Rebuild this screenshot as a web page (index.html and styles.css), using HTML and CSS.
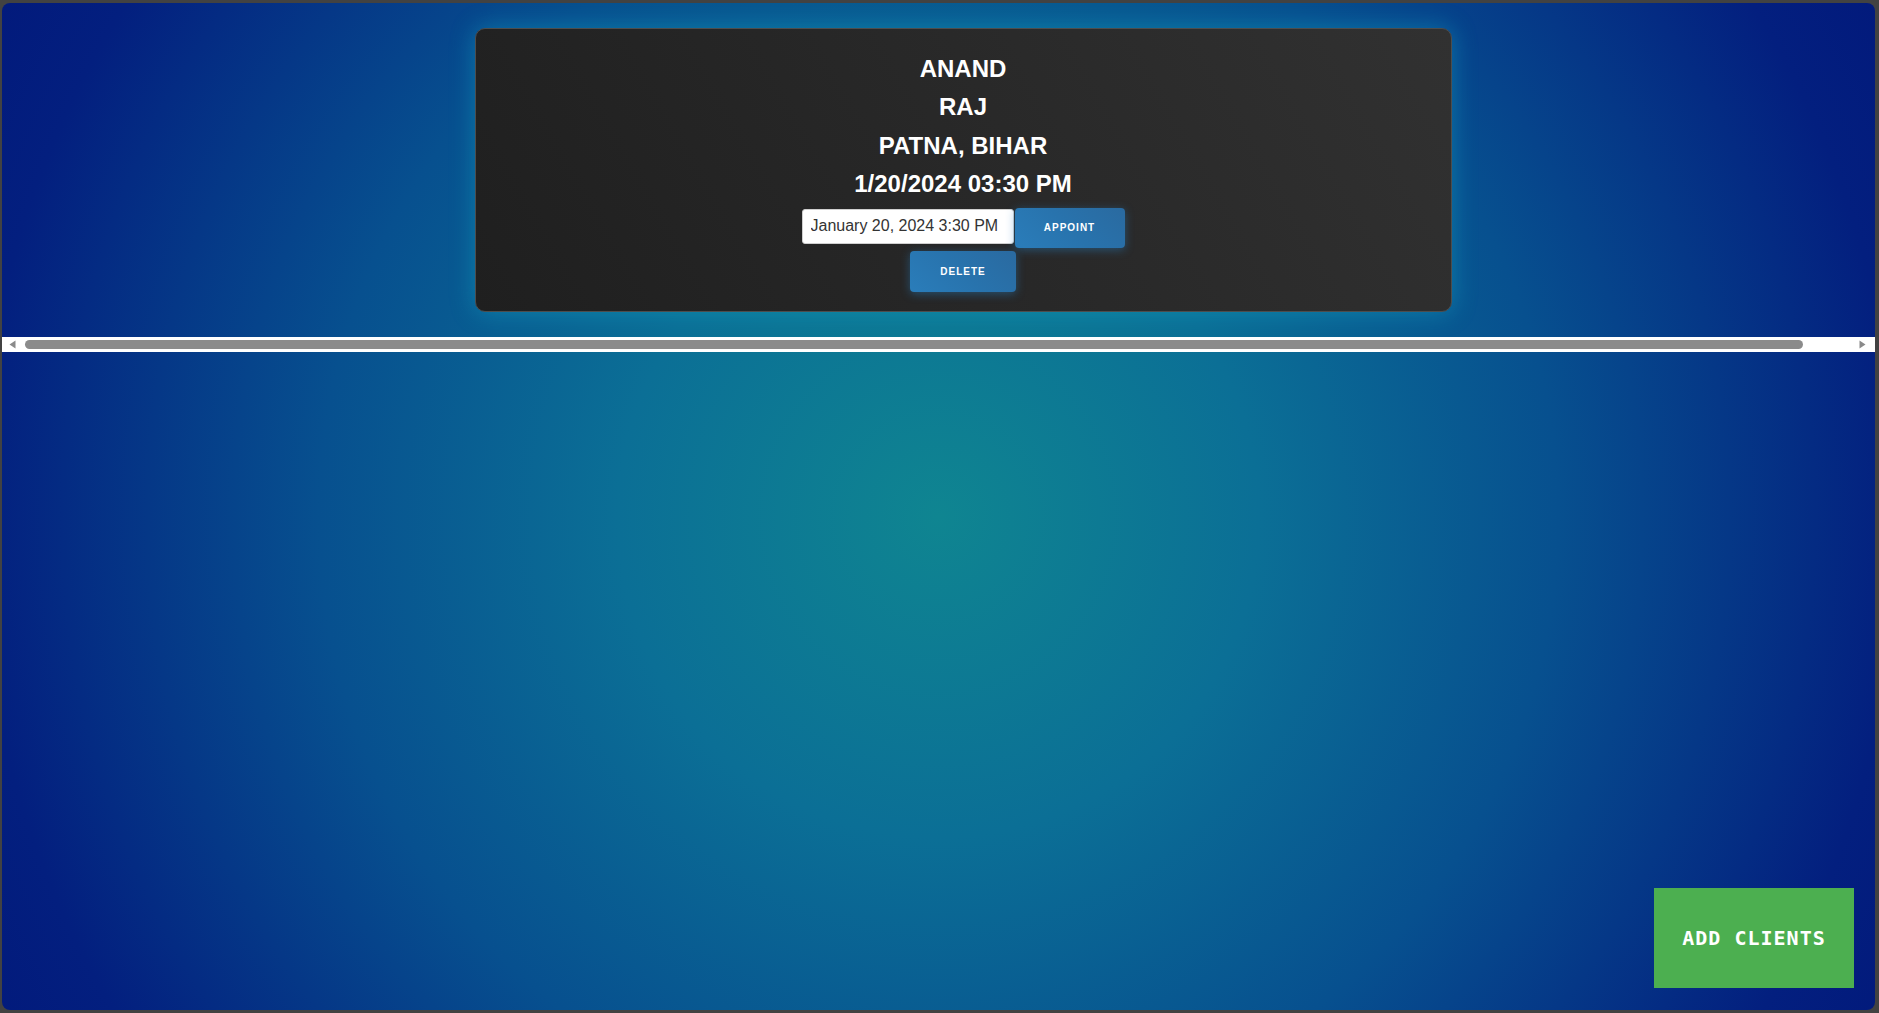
FILE: index.html
```html
<!DOCTYPE html>
<html lang="en">
<head>
<meta charset="utf-8">
<title>Clients</title>
<link rel="stylesheet" href="styles.css">
</head>
<body>
<div class="app">
  <div class="client-strip">
    <div class="client-track">
      <div class="client-card">
        <p class="client-line">ANAND</p>
        <p class="client-line">RAJ</p>
        <p class="client-line">PATNA, BIHAR</p>
        <p class="client-line">1/20/2024 03:30 PM</p>
        <div class="appoint-row">
          <input class="date-input" type="text" value="January 20, 2024 3:30 PM">
          <button class="action-btn appoint-btn">APPOINT</button>
        </div>
        <button class="action-btn delete-btn">DELETE</button>
      </div>
    </div>
  </div>
  <div class="hscroll">
    <svg class="hs-arrow" width="17" height="15" viewBox="0 0 17 15"><polygon points="13.5,3.5 13.5,11.5 7.5,7.5" fill="#8a8a8a"/></svg>
    <div class="hs-track"><div class="hs-thumb"></div></div>
    <svg class="hs-arrow" width="17" height="15" viewBox="0 0 17 15"><polygon points="1.5,3.5 1.5,11.5 7.5,7.5" fill="#8a8a8a"/></svg>
  </div>
  <button class="add-clients">ADD CLIENTS</button>
</div>
</body>
</html>
```
FILE: styles.css
```css
html, body {
  margin: 0;
  height: 100%;
}
body {
  background: #424242;
  padding: 3px 4px 3px 2px;
  box-sizing: border-box;
  font-family: "Liberation Sans", Arial, sans-serif;
  overflow: hidden;
}
.app {
  height: 1007px;
  border-radius: 8px;
  background: radial-gradient(circle at 50% 51%, #0f8591 0%, #0b6f96 30%, #07508f 58%, #031f7f 90%, #021a7c 100%);
  display: flex;
  flex-direction: column;
  overflow: hidden;
}
.client-strip {
  overflow: hidden;
}
.client-track {
  width: 1922px;
  display: flex;
  justify-content: center;
  padding: 25px 0 25px;
}
.client-card {
  width: 977px;
  box-sizing: border-box;
  border: 1px solid #4d4d4d;
  border-radius: 10px;
  background: linear-gradient(60deg, #1f1f1f 0%, #282828 50%, #313131 100%);
  box-shadow: 0 0 24px rgba(20, 170, 200, 0.45);
  padding: 20.5px 0 19.5px;
  display: flex;
  flex-direction: column;
  align-items: center;
}
.client-line {
  margin: 0;
  color: #ffffff;
  font-size: 24px;
  font-weight: bold;
  line-height: 38.5px;
}
.appoint-row {
  display: flex;
  align-items: flex-start;
  margin-top: 4px;
}
.date-input {
  margin: 1px 0 0;
  width: 212px;
  height: 35px;
  box-sizing: border-box;
  border: 1px solid #cfcfcf;
  border-radius: 3px;
  background: #fff;
  padding: 0 0 0 8px;
  font-family: "Liberation Sans", Arial, sans-serif;
  font-size: 16px;
  color: #333;
  outline: none;
}
.action-btn {
  border: none;
  border-radius: 4px;
  background: linear-gradient(45deg, #2a7dba 0%, #2873ad 50%, #2a6aa0 100%);
  box-shadow: 0 2px 10px rgba(40, 130, 200, 0.45);
  color: #fff;
  font-family: "Liberation Sans", Arial, sans-serif;
  font-weight: bold;
  font-size: 10px;
  letter-spacing: 1px;
  padding: 0;
  cursor: pointer;
}
.appoint-btn {
  width: 110px;
  height: 40px;
  margin-left: 1px;
}
.delete-btn {
  width: 106px;
  height: 41px;
  margin-top: 3px;
}
.hscroll {
  height: 15px;
  background: #ffffff;
  display: flex;
  align-items: center;
}
.hs-arrow {
  flex: none;
  display: block;
}
.hs-track {
  flex: 1;
  height: 15px;
  display: flex;
  align-items: center;
}
.hs-thumb {
  margin-left: 6px;
  width: 1778px;
  height: 9px;
  border-radius: 5px;
  background: #8b8b8b;
}
.add-clients {
  position: fixed;
  right: 25px;
  bottom: 25px;
  width: 200px;
  height: 100px;
  border: none;
  background: #4caf50;
  color: #fff;
  font-family: "DejaVu Sans Mono", monospace;
  font-weight: bold;
  font-size: 20px;
  letter-spacing: 1px;
  padding: 0;
}
```
